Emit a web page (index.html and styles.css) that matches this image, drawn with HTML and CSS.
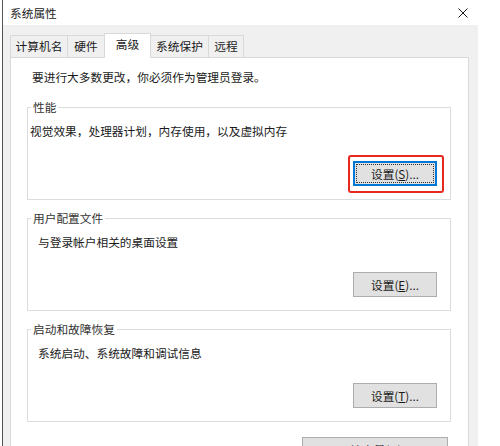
FILE: index.html
```html
<!DOCTYPE html>
<html lang="zh-CN">
<head>
    <meta charset="UTF-8">
    <meta name="viewport" content="width=device-width, initial-scale=1.0">
    <title>系统属性</title>
    <link rel="stylesheet" href="styles.css">
</head>
<body>
    <div class="window">
        <div class="titlebar">
            <span class="title">系统属性</span>
            <svg class="close" width="10" height="10" viewBox="0 0 10 10">
                <path d="M0.5 0.5 L9.5 9.5 M9.5 0.5 L0.5 9.5" stroke="#1a1a1a" stroke-width="1" fill="none"/>
            </svg>
        </div>

        <div class="client">
            <div class="tabs">
                <div class="tab tab-name">计算机名</div>
                <div class="tab tab-hw">硬件</div>
                <div class="tab tab-adv active">高级</div>
                <div class="tab tab-prot">系统保护</div>
                <div class="tab tab-remote">远程</div>
            </div>

            <div class="panel">
                <p class="intro">要进行大多数更改，你必须作为管理员登录。</p>

                <fieldset class="group">
                    <legend>性能</legend>
                    <p class="group-desc tight">视觉效果，处理器计划，内存使用，以及虚拟内存</p>
                    <div class="group-actions">
                        <span class="highlight">
                            <button class="btn focused">设置(<u>S</u>)...</button>
                        </span>
                    </div>
                </fieldset>

                <fieldset class="group">
                    <legend>用户配置文件</legend>
                    <p class="group-desc">与登录帐户相关的桌面设置</p>
                    <div class="group-actions">
                        <button class="btn">设置(<u>E</u>)...</button>
                    </div>
                </fieldset>

                <fieldset class="group">
                    <legend>启动和故障恢复</legend>
                    <p class="group-desc">系统启动、系统故障和调试信息</p>
                    <div class="group-actions">
                        <button class="btn">设置(<u>T</u>)...</button>
                    </div>
                </fieldset>

                <div class="env-row">
                    <button class="btn btn-wide">环境变量(<u>N</u>)...</button>
                </div>
            </div>
        </div>
    </div>
</body>
</html>
```

FILE: styles.css
```css
* {
    box-sizing: border-box;
    margin: 0;
    padding: 0;
}

body {
    background: #fff;
    font-family: "Noto Sans CJK SC", "Liberation Sans", sans-serif;
    font-size: 11.7px;
    color: #1a1a1a;
    overflow: hidden;
}

.window {
    margin-left: 2px;
    height: 446px;
    border-left: 1px solid #555;
    display: flex;
    flex-direction: column;
}

.titlebar {
    height: 25px;
    display: flex;
    align-items: center;
    justify-content: space-between;
    padding: 0 32px 0 7px;
    background: #fff;
}

.title {
    line-height: 25px;
    color: #222;
}

.close {
    display: block;
}

.client {
    width: 475px;
    flex: 1;
    background: #f0f0f0;
    padding: 8px 9px 0 7px;
    display: flex;
    flex-direction: column;
    overflow: hidden;
}

/* tab strip */
.tabs {
    height: 24px;
    display: flex;
    align-items: flex-end;
    position: relative;
    z-index: 1;
}

.tab {
    height: 22px;
    line-height: 20px;
    text-align: center;
    border: 1px solid #d9d9d9;
    border-bottom: none;
    background: #f0f0f0;
    margin-right: -1px;
    color: #1a1a1a;
}

.tab-name { width: 58px; }
.tab-hw { width: 38px; }
.tab-adv { width: 47px; }
.tab-prot { width: 59px; }
.tab-remote { width: 36px; }

.tab.active {
    height: 25px;
    background: #fff;
    margin-bottom: -1px;
    position: relative;
}

.panel {
    flex: 1;
    background: #fff;
    border: 1px solid #d9d9d9;
    padding: 11px 17px 0 16px;
}

.intro {
    line-height: 16px;
    padding-left: 5px;
}

/* group boxes */
.group {
    border: 1px solid #dcdcdc;
    margin: 14px 0 0;
    padding: 0 13px 13px 10px;
    min-width: 0;
}

.group + .group {
    margin-top: 10px;
}

.group legend {
    line-height: 16px;
    padding: 0 2px;
    margin-left: -7px;
    color: #333;
}

.group-desc {
    margin-top: 8px;
    line-height: 16px;
}

.group-desc.tight {
    margin-left: -8px;
}

.group-actions {
    display: flex;
    justify-content: flex-end;
    margin-top: 22px;
}

.btn {
    width: 84px;
    height: 25px;
    border: 1px solid #adadad;
    background: #e1e1e1;
    font-family: inherit;
    font-size: 11.7px;
    color: #1a1a1a;
    position: relative;
}

.btn u {
    text-underline-offset: 1px;
}

.btn.focused {
    border-color: #0078d7;
    box-shadow: inset 0 0 0 1px #0078d7;
}

.btn.focused::before {
    content: "";
    position: absolute;
    top: 2px;
    left: 2px;
    right: 2px;
    bottom: 2px;
    border: 1px dotted #333;
}

/* red annotation box round the focused button */
.highlight {
    position: relative;
    display: block;
}

.highlight::after {
    content: "";
    position: absolute;
    top: -6px;
    left: -5px;
    right: -7px;
    bottom: -7px;
    border: 2px solid #e6281e;
    border-radius: 3px;
}

.env-row {
    display: flex;
    justify-content: flex-end;
    margin-top: 15px;
    padding-right: 3px;
}

.btn-wide {
    width: 146px;
}
```
